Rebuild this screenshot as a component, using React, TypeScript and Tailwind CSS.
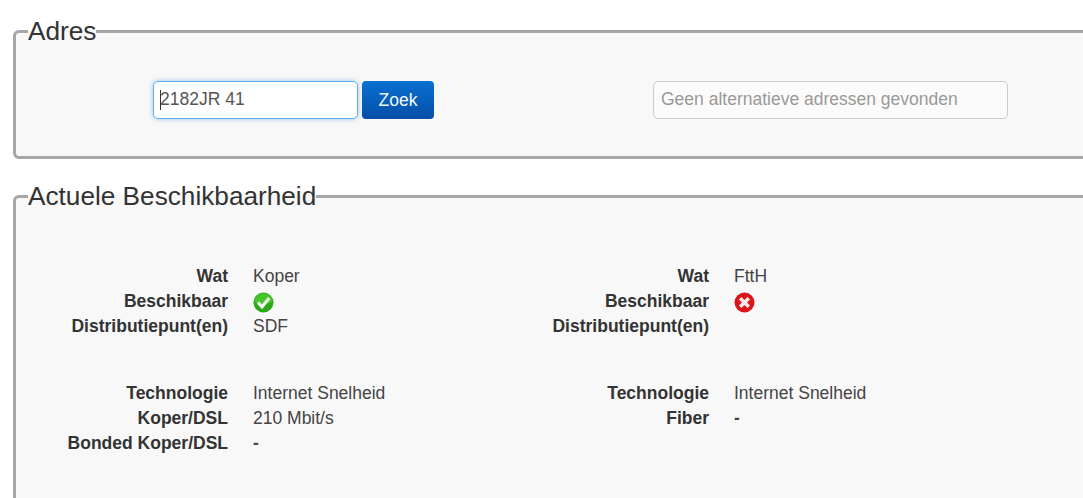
const Check = () => (
  <svg width="21" height="21" viewBox="0 0 21 21" className="mt-[2px] block">
    <circle cx="10.5" cy="10.5" r="10" fill="#2aa818" />
    <path d="M1.5 10a9 9 0 0 1 18 0c-3 2.5-15 2.5-18 0z" fill="#44c62b" />
    <path d="M5 10.5l4 4.4 7.2-9" fill="none" stroke="#f2fbf0" strokeWidth="3.2" />
  </svg>
);

const Cross = () => (
  <svg width="21" height="21" viewBox="0 0 21 21" className="mt-[2px] block">
    <circle cx="10.5" cy="10.5" r="10" fill="#dc141c" />
    <path d="M6.2 6.2l8.6 8.6M14.8 6.2l-8.6 8.6" fill="none" stroke="#fbe9e9" strokeWidth="3.6" />
  </svg>
);

const Row = ({ label, children }: { label: string; children?: React.ReactNode }) => (
  <div className="flex h-[25px] items-center leading-[25px]">
    <div className="w-[212px] text-right font-bold text-[#333]">{label}</div>
    <div className="ml-[25px]">{children}</div>
  </div>
);

const Column = ({
  wat,
  icon,
  point,
  rows,
}: {
  wat: string;
  icon: React.ReactNode;
  point?: string;
  rows: [string, string][];
}) => (
  <div className="w-[481px]">
    <Row label="Wat">{wat}</Row>
    <Row label="Beschikbaar">{icon}</Row>
    <Row label="Distributiepunt(en)">{point}</Row>
    <div className="mt-[42px]">
      <Row label="Technologie">Internet Snelheid</Row>
      {rows.map(([label, value]) => (
        <Row key={label} label={label}>
          {value === "-" ? <span className="font-bold">-</span> : value}
        </Row>
      ))}
    </div>
  </div>
);

export default function App() {
  return (
    <div className="h-[498px] w-[1083px] overflow-hidden bg-white pl-[13px] pt-[18px] font-['Liberation_Sans',Arial,sans-serif] text-[17.5px] text-[#444]">
      <fieldset className="w-[1200px] rounded-[6px] border-[3px] border-[#a6a6a6] bg-[#f8f8f8] pb-[37px] pl-[137px] pt-[37px]">
        <legend className="ml-[-125px] text-[26.2px] leading-[26px] text-[#333]">Adres</legend>
        <div className="flex">
          <div className="relative">
            <input
              readOnly
              value="2182JR 41"
              className="h-[38px] w-[205px] rounded-[5px] border border-[#66afe9] bg-white px-[6px] pb-[1px] text-[#555] shadow-[0_0_5px_rgba(102,175,233,0.7)] outline-none"
            />
            <span className="absolute left-[7px] top-[9px] h-[20px] w-px bg-[#333]" />
          </div>
          <button className="ml-[4px] h-[38px] w-[72px] rounded-[4px] bg-gradient-to-b from-[#0b70d2] to-[#044fa6] font-['Liberation_Sans',Arial,sans-serif] text-[#f4f8fc]">
            Zoek
          </button>
          <input
            readOnly
            placeholder="Geen alternatieve adressen gevonden"
            className="ml-[219px] h-[38px] w-[355px] rounded-[5px] border border-[#cccccc] bg-[#fbfbfb] px-[7px] pb-[1px] outline-none placeholder:text-[#999]"
          />
        </div>
      </fieldset>
      <fieldset className="mt-[24px] h-[400px] w-[1200px] rounded-[6px] border-[3px] border-[#a6a6a6] bg-[#f8f8f8] pt-[55px]">
        <legend className="ml-[12px] text-[26.2px] leading-[26px] text-[#333]">Actuele Beschikbaarheid</legend>
        <div className="flex">
          <Column
            wat="Koper"
            icon={<Check />}
            point="SDF"
            rows={[
              ["Koper/DSL", "210 Mbit/s"],
              ["Bonded Koper/DSL", "-"],
            ]}
          />
          <Column wat="FttH" icon={<Cross />} rows={[["Fiber", "-"]]} />
        </div>
      </fieldset>
    </div>
  );
}
